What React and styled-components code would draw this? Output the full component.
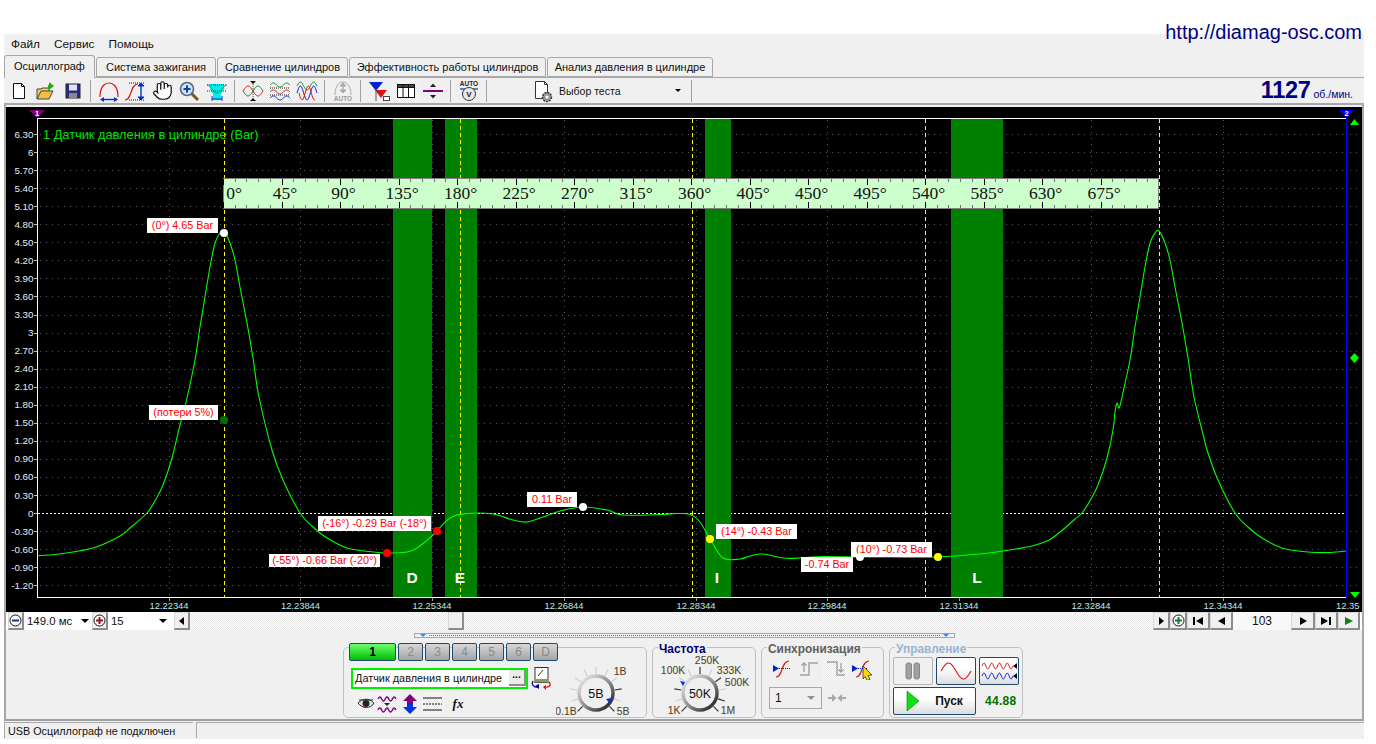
import React from "react";
import styled, { createGlobalStyle } from "styled-components";
import { Hand } from "lucide-react";

const UI = `"Liberation Sans", Arial, sans-serif`;
const Global = createGlobalStyle`
  html, body { margin: 0; padding: 0; background: #fff; height: 744px; overflow: hidden; }
  #root { width: 1376px; height: 744px; }
`;
const dither = `repeating-conic-gradient(#ffffff 0 25%, #e6e6e6 0 50%) 0 0 / 2px 2px`;

const Page = styled.div`position: relative; width: 1376px; height: 744px; padding: 34px 0 0 4px; box-sizing: border-box; font-family: ${UI}; color: #111;`;
const SiteLink = styled.div`position: absolute; top: 20px; right: 14px; font-size: 20px; line-height: 24px; color: #000080; z-index: 5;`;
const Win = styled.div`width: 1360px; height: 705px; background: #f0f0f0; display: flex; flex-direction: column;`;
const Menu = styled.div`height: 20px; padding-bottom: 1px; box-sizing: content-box; display: flex; align-items: center; padding-left: 7px; gap: 14px; font-size: 11.8px;`;
const TabRow = styled.div`height: 22px; display: flex; align-items: flex-end; position: relative; z-index: 2;`;
const Tab = styled.div`
  width: ${p => p.$w}px; margin-right: 1px; box-sizing: border-box;
  height: ${p => (p.$active ? 23 : 20)}px; margin-bottom: ${p => (p.$active ? -1 : 0)}px;
  border: 1px solid #a8a8a8; border-bottom: ${p => (p.$active ? "none" : "1px solid #a8a8a8")};
  border-radius: 3px 3px 0 0; background: #f0f0f0; font-size: 11px; text-align: center; line-height: ${p => (p.$active ? 20 : 19)}px;
`;
const Toolbar = styled.div`height: 28px; box-sizing: border-box; border-top: 1px solid #a8a8a8; border-bottom: 2px solid #a8a8a8; display: flex; align-items: center; padding-left: 1px; position: relative;`;
const ToolBtn = styled.div`width: 27px; height: 25px; display: flex; align-items: center; justify-content: center; flex: none; background: ${p => (p.$on ? dither : "transparent")};`;
const Sep = styled.div`width: 1px; height: 22px; background: #a0a0a0; margin: 0 4px; flex: none;`;
const TestPick = styled.div`display: flex; align-items: center; margin-left: 41px; width: 155px; gap: 3px; font-size: 10.5px; flex: none;`;
const TestArrow = styled.span`margin-left: auto; margin-right: 6px; width: 0; height: 0; border: 3px solid transparent; border-top: 3px solid #000; margin-top: 3px;`;
const Rpm = styled.div`margin-left: auto; margin-right: 11px; color: #000080; display: flex; align-items: baseline; gap: 3px;`;
const RpmNum = styled.span`font-size: 23.5px; font-weight: 700; letter-spacing: -0.3px;`;
const RpmUnit = styled.span`font-size: 10.5px;`;
const Frame = styled.div`border-left: 2px solid #a8a8a8; border-right: 2px solid #a8a8a8; padding-top: 2px; height: 525px; box-sizing: border-box; display: flex; flex-direction: column;`;
const Chart = styled.div`position: relative; height: 505px; background: #000; overflow: hidden; flex: none;`;
const ChartSvg = styled.svg`display: block; position: absolute; inset: 0;`;
const ChartTitle = styled.div`position: absolute; left: 37px; top: 21px; font-size: 12.8px; line-height: 14px; color: #00e000;`;
const Tag = styled.div`
  position: absolute; left: ${p => p.$x - 6}px; top: ${p => p.$y - 107}px; width: ${p => p.$w}px; height: ${p => p.$h}px;
  background: #fff; color: #ff0000; font-size: 10.8px; line-height: ${p => p.$h}px; text-align: center; white-space: nowrap;
`;
const TimeRow = styled.div`height: 18px; background: #fff; display: flex; align-items: stretch; flex: none;`;
const Bevel = styled.div`
  width: ${p => p.$w}px; flex: none; box-sizing: border-box; background: #f0f0f0; margin: ${p => p.$m || 0};
  border: 1px solid #d8d8d8; border-right: 2px solid #8c8c8c; border-bottom: 2px solid #8c8c8c;
  display: flex; align-items: center; justify-content: center;
`;
const ComboText = styled.div`width: ${p => p.$w}px; flex: none; font-size: 11.4px; line-height: 18px; padding-left: 3px; box-sizing: border-box; display: flex; align-items: center;`;
const Caret = styled.span`margin-left: auto; margin-right: ${p => p.$r || 4}px; width: 0; height: 0; border: 4px solid transparent; border-top: 4px solid #000; border-bottom: 0; flex: none;`;
const Track = styled.div`flex: 1; background: ${dither}; display: flex;`;
const Thumb = styled(Bevel)`margin-left: 258px;`;
const PageNum = styled.div`width: 58px; font-size: 12px; text-align: center; line-height: 18px; flex: none; background: #f8f8f8;`;
const Panel = styled.div`height: 91px; box-sizing: border-box; border-left: 2px solid #a8a8a8; border-right: 2px solid #a8a8a8; border-bottom: 2px solid #a0a0a0; padding-top: 3px; flex: none;`;
const RangeBar = styled.div`margin-left: 408px; width: 541px; height: 5px; box-sizing: border-box; border: 1px solid #a8a8a8; display: flex; align-items: center; justify-content: space-between; padding: 0 5px; position: relative;`;
const RangeDots = styled.div`position: absolute; left: 14px; right: 14px; top: 1px; border-top: 1px dotted #3a7fd0;`;
const RangeMark = styled.span`width: 0; height: 0; border: 3px solid transparent; border-top: 3px solid #3a8ae0; border-bottom: 0;`;
const Groups = styled.div`display: flex; gap: 5px; margin: 9px 0 0 337px;`;
const Group = styled.div`position: relative; width: ${p => p.$w}px; height: 71px; box-sizing: border-box; border: 1px solid #c0c0c0; border-radius: 5px; padding: ${p => p.$pad || 0}; display: flex; flex-direction: ${p => p.$dir || "row"};`;
const Legend = styled.div`position: absolute; left: 5px; top: -6px; padding: 0 1px; background: #f0f0f0; font-size: 11.9px; font-weight: 700; line-height: 14px; color: ${p => p.$c};`;
const LeftCol = styled.div`width: 207px; flex: none; margin-top: -5px; margin-left: 5px;`;
const ChannelRow = styled.div`display: flex; gap: 2px;`;
const Channel = styled.div`
  width: ${p => (p.$active ? 47 : 25)}px; height: 18px; box-sizing: border-box; border: 1px solid #1d4a74; border-radius: 2px; flex: none;
  background: ${p => (p.$active ? "linear-gradient(#6dff6d, #00bd00)" : "linear-gradient(#d8d8d8, #a4a4a4)")};
  color: ${p => (p.$active ? "#000" : "#8a8a8a")}; font-weight: ${p => (p.$active ? 700 : 400)}; font-size: 12px; line-height: 16px; text-align: center;
`;
const InputRow = styled.div`display: flex; align-items: center; margin: 5px 0 0 2px; gap: 2px;`;
const InputBox = styled.div`width: 177px; height: 21px; box-sizing: border-box; border: 1px solid #00f000; outline: 1px solid #00f000; outline-offset: -2px; background: #fff; display: flex; align-items: center; justify-content: space-between; padding: 0 1px 0 3px; font-size: 10.9px; white-space: nowrap;`;
const DotsBtn = styled.div`width: 17px; height: 16px; background: #ececec; border-right: 2px solid #909090; border-bottom: 2px solid #909090; font-size: 10px; font-weight: 700; text-align: center; line-height: 9px; box-sizing: border-box; flex: none;`;
const ChIcons = styled.div`display: flex; align-items: center; margin: 2px 0 0 6px;`;
const ChIcon = styled.div`width: ${p => p.$w || 22}px; height: 23px; display: flex; align-items: center; justify-content: center; background: ${p => (p.$on ? dither : "transparent")}; margin-right: ${p => p.$mr || 0}px; font-family: "Liberation Serif", serif; font-style: italic; font-weight: 700; font-size: 13px;`;
const KnobSvg = styled.svg`display: block; flex: none; align-self: flex-end;`;
const SyncRow = styled.div`display: flex; height: 22px; margin-left: 6px;`;
const SyncCell = styled.div`width: 27px; height: 22px; display: flex; align-items: center; justify-content: center; background: ${p => (p.$on ? dither : "transparent")};`;
const SyncBottom = styled.div`display: flex; align-items: center; margin: 7px 0 0 7px; gap: 5px;`;
const SyncSelect = styled.div`width: 53px; height: 22px; box-sizing: border-box; border: 1px solid #a8a8a8; display: flex; align-items: center; padding-left: 5px; font-size: 12px;`;
const GrayCaret = styled.span`margin-left: auto; margin-right: 6px; width: 0; height: 0; border: 4px solid transparent; border-top: 4px solid #909090; border-bottom: 0;`;
const CtlRow = styled.div`display: flex; gap: 3px; margin-left: 3px; margin-bottom: ${p => p.$mb || 0}px; align-items: center;`;
const CtlBtn = styled.div`
  width: ${p => p.$w || 40}px; height: 28px; box-sizing: border-box; border-radius: 2px; flex: none;
  border: ${p => (p.$flat ? "1px solid #b4b4b4" : "1px solid #1d4a74")}; display: flex; align-items: center; gap: 15px; justify-content: center;
  background: ${p => (p.$flat ? "#f0f0f0" : "linear-gradient(#ffffff 40%, #dcdcdc)")}; font-size: 12px; font-weight: 700;
`;
const Freq = styled.div`margin-left: 6px; color: #007000; font-size: 12px; font-weight: 700; letter-spacing: 0.3px;`;
const Status = styled.div`margin-top: 1px; height: 16px; display: flex; gap: 3px;`;
const StatusCell = styled.div`width: ${p => p.$w ? p.$w + "px" : "auto"}; flex: ${p => p.$w ? "none" : 1}; box-sizing: border-box; border-top: 1px solid #a8a8a8; border-left: 1px solid #a8a8a8; padding-left: 3px; font-size: 10.8px; line-height: 16px;`;

/* helpers */
const wave = (x0, x1, y, a, n, ph = 0) => {
  const pts = [];
  for (let x = x0; x <= x1 + 0.01; x += 0.5) pts.push(`${x},${(y - a * Math.sin(((x - x0) / (x1 - x0)) * n * 2 * Math.PI + ph)).toFixed(2)}`);
  return "M" + pts.join("L");
};
const Ico = ({ w = 22, h = 22, children }) => <svg width={w} height={h} viewBox={`0 0 ${w} ${h}`} fill="none">{children}</svg>;
const arrowV = (x, y0, y1, c) => (<g><path d={`M${x} ${y0}V${y1}`} stroke={c} strokeWidth="1.4" /><path d={`M${x - 3} ${y0 + 3}L${x} ${y0}L${x + 3} ${y0 + 3}zM${x - 3} ${y1 - 3}L${x} ${y1}L${x + 3} ${y1 - 3}z`} fill={c} stroke={c} /></g>);

const icons = {
  doc: <Ico><path d="M5.5 3.5h8l3 3v12h-11z" fill="#fff" stroke="#111" /><path d="M13.5 3.5v3h3" stroke="#111" /></Ico>,
  open: <Ico w={24}><path d="M3 19V9h4l1-1h7v3" fill="#f3d060" stroke="#444" /><path d="M3 19l4-8h12l-4 8z" fill="#f0c040" stroke="#444" /><path d="M15 2l5 4-5 4z" fill="#18b018" /><path d="M15 5v4" stroke="#18b018" strokeWidth="2" /></Ico>,
  save: <Ico><rect x="4" y="4" width="14" height="14" fill="#2c2c88" stroke="#222" /><rect x="7" y="4.5" width="8" height="6" fill="#dfe4f0" /><rect x="7" y="13" width="8" height="5" fill="#888" /></Ico>,
  arch: <Ico w={24}><path d="M3 17C3 5 9 3 12 3s9 2 9 14" stroke="#e01010" strokeWidth="1.2" /><path d="M4 19.5h16" stroke="#0030d0" strokeWidth="1.4" /><path d="M7 17l-4 2.5 4 2.5zM17 17l4 2.5-4 2.5z" fill="#0030d0" /></Ico>,
  scurve: <Ico w={24}><path d="M1 20C8 20 6 4 14 4" stroke="#e01010" strokeWidth="1.2" /><path d="M5 3h15M5 20h15" stroke="#111" strokeDasharray="1 1" />{arrowV(17, 3, 20, "#0030d0")}</Ico>,
  hand: <Hand size={21} fill="#fff" strokeWidth={1.4} color="#111" />,
  mag: <Ico w={24}><path d="M13 13l7 7" stroke="#7a5a20" strokeWidth="3" /><circle cx="9" cy="9" r="6.5" fill="#cfe2f6" stroke="#5a6a80" strokeWidth="1.6" /><path d="M5.5 9h7M9 5.5v7" stroke="#1040a0" strokeWidth="2" /></Ico>,
  cyanw: <Ico w={24}><path d="M5 4h14v5l-3 5v6H8v-6L5 9z" fill="#00eeee" /><path d="M2 5h20M2 11h20" stroke="#222" strokeDasharray="1 1" /><path d={wave(2, 22, 9, 4, 1, Math.PI / 2)} stroke="#208020" /><path d="M7 19h10" stroke="#0030d0" /><path d="M7 16v5M17 16v5" stroke="#0030d0" /></Ico>,
  crossw: <Ico w={22}><path d={wave(1, 21, 11, 5, 1)} stroke="#e01010" /><path d={wave(1, 21, 11, -5, 1)} stroke="#108010" /><path d="M11 4v14" stroke="#555" strokeDasharray="1 1" /><path d="M8 1h6l-3 3zM8 21h6l-3-3z" fill="#111" /></Ico>,
  threew: <Ico w={22}><path d={wave(1, 21, 5, 2, 1.5)} stroke="#109010" /><path d={wave(1, 21, 12, 2, 1.5)} stroke="#e01010" /><path d={wave(1, 21, 18, 2, 1.5)} stroke="#0020e0" /><path d="M1 8h20M1 15h20" stroke="#222" strokeDasharray="1 1" /></Ico>,
  overw: <Ico w={22}><path d={wave(1, 21, 6, 4, 1.5)} stroke="#109010" /><path d={wave(1, 21, 13, 7, 1.5)} stroke="#0020e0" /><path d={wave(3, 19, 13, -7, 1.3)} stroke="#e01010" /></Ico>,
  auto: <Ico w={22}><path d="M3 15C3 5 8 2 11 2s8 3 8 13" stroke="#aaa" />{arrowV(11, 3, 13, "#aaa")}<text x="11" y="21" textAnchor="middle" fontSize="6.5" fontWeight="700" fill="#999" fontFamily={UI}>AUTO</text></Ico>,
  funnel: <Ico w={24}><path d="M2 2h14l-7 9z" fill="#0020d0" /><path d="M8 10h12l-6 8z" fill="#e01010" /><path d="M9 8v13" stroke="#555" /><rect x="16.5" y="16.5" width="6" height="4" fill="#fff" stroke="#445" /></Ico>,
  table: <Ico w={22}><rect x="2.5" y="4.5" width="17" height="13" fill="#fff" stroke="#111" /><rect x="2.5" y="4.5" width="17" height="3" fill="#444" stroke="#111" /><path d="M8 5v13M13.5 5v13" stroke="#111" /></Ico>,
  divider: <Ico w={22}><path d="M1 11h20" stroke="#800080" strokeWidth="2" /><path d="M8 7h6l-3-3.5zM8 15h6l-3 3.5z" fill="#222" /></Ico>,
  autov: <Ico w={22}><text x="11" y="6" textAnchor="middle" fontSize="6.5" fontWeight="700" fill="#222" fontFamily={UI}>AUTO</text><circle cx="11" cy="14" r="6.5" fill="#e8e8e8" stroke="#333" /><text x="11" y="17" textAnchor="middle" fontSize="8" fontWeight="700" fill="#222" fontFamily={UI}>V</text><path d="M2 9h5M15 9h5" stroke="#1060e0" strokeWidth="1.5" /></Ico>,
  testdoc: <Ico w={24} h={24}><path d="M3.5 2.5h9l3 3v14h-12z" fill="#fff" stroke="#333" /><path d="M12.5 2.5v3h3" stroke="#333" /><circle cx="15" cy="18" r="4.5" fill="#999" stroke="#333" strokeDasharray="2 1" strokeWidth="1.4" /><circle cx="15" cy="18" r="1.5" fill="#fff" /></Ico>,
  eye: <Ico w={18} h={14}><path d="M1 6C5 1 13 1 17 6c-3 6-12 6-16 0z" fill="#ddd" stroke="#333" /><circle cx="9" cy="6.5" r="3.4" fill="#222" /><path d="M2 3l14 0" stroke="#333" /><circle cx="7" cy="9" r="1" fill="#b02020" /></Ico>,
  purplew: <Ico w={22} h={22}><path d={wave(1, 19, 6, 2, 2.5)} stroke="#800080" strokeWidth="1.4" /><path d={wave(1, 19, 17, 2, 2.5)} stroke="#800080" strokeWidth="1.4" /><path d="M7 10h6l-3 3z" fill="#222" /></Ico>,
  updown: <Ico w={16} h={22}><path d="M8 1l7 7h-4v3H5V8H1z" fill="#800080" /><path d="M8 21l-7-7h4v-3h6v3h4z" fill="#0030e0" /></Ico>,
  lines: <Ico w={22} h={22}><path d="M1 5h19M1 17h19" stroke="#111" /><path d="M1 11h19" stroke="#111" strokeDasharray="2 1" /></Ico>,
  meter: <Ico w={22} h={24}><rect x="5" y="1.5" width="13" height="15" fill="#fff" stroke="#333" /><rect x="5" y="13" width="13" height="3.5" fill="#80a060" /><path d="M8 10l5-6" stroke="#333" /><path d="M3 15c-2 4 1 7 6 6" stroke="#000090" strokeWidth="1.2" /><path d="M19 16c3 3 0 6-5 5" stroke="#e01010" strokeWidth="1.2" /><path d="M5 20l4-2v5z" fill="#000090" /><path d="M16 19l-3 2 3 3z" fill="#e01010" /></Ico>,
  sync1: <Ico w={22}><path d="M5 19C12 19 10 3 18 3" stroke="#e01010" strokeWidth="1.2" /><path d="M2 7l6 3.5-6 3.5z" fill="#0020d0" /><path d="M8 10.5h11" stroke="#0020d0" strokeDasharray="1 1" /></Ico>,
  stepUp: <Ico w={22}><path d="M2 17h9V5h9" stroke="#a0a0a0" strokeWidth="1.4" /><path d="M6 5v9M3.5 7.5L6 5l2.5 2.5" stroke="#a0a0a0" strokeWidth="1.3" /></Ico>,
  stepDn: <Ico w={22}><path d="M2 4h10v13h8" stroke="#a0a0a0" strokeWidth="1.4" /><path d="M16 5v9M13.5 11.5L16 14l2.5-2.5" stroke="#a0a0a0" strokeWidth="1.3" /></Ico>,
  sync2: <Ico w={24}><path d="M5 19C12 19 10 3 18 3" stroke="#e01010" strokeWidth="1.2" /><path d="M1 7l6 3.5-6 3.5z" fill="#0020d0" /><path d="M7 10.5h9" stroke="#0020d0" strokeDasharray="1 1" /><path d="M12 8l9 9-4 .5 2 4-3 1-2-4-2 2.5z" fill="#ffd800" stroke="#333" strokeWidth=".8" /></Ico>,
  arrowsIn: <Ico w={20} h={10}><path d="M1 5h7M19 5h-7" stroke="#a8a8a8" strokeWidth="2" /><path d="M5 1l4.5 4L5 9zM15 1l-4.5 4L15 9z" fill="#a8a8a8" /></Ico>,
  pause: <Ico w={20} h={20}><rect x="3" y="2" width="5.5" height="16" rx="2" fill="#a0a0a0" stroke="#888" /><rect x="11" y="2" width="5.5" height="16" rx="2" fill="#a0a0a0" stroke="#888" /></Ico>,
  sine: <Ico w={32} h={22}><path d={wave(1, 31, 11, 8, 1)} stroke="#e01010" strokeWidth="1.1" /></Ico>,
  redblue: <Ico w={36} h={22}><path d={wave(1, 32, 6, 3, 4)} stroke="#e01010" /><path d={wave(1, 32, 16, 3, 4)} stroke="#0020d0" /><path d="M36 3l-4 3 4 3zM36 13l-4 3 4 3z" fill="#111" /></Ico>,
  play: <Ico w={14} h={22}><path d="M1 1l12 10L1 21z" fill="#10e010" stroke="#109010" strokeWidth=".7" /></Ico>,
};

const T = ({ d, c = "#000" }) => <svg width="12" height="12" viewBox="0 0 12 12"><path d={d} fill={c} /></svg>;

/* chart data */
const gridX = [169, 300.5, 432, 564, 696, 827, 959, 1091, 1223];
const timeLabels = ["12.22344", "12.23844", "12.25344", "12.26844", "12.28344", "12.29844", "12.31344", "12.32844", "12.34344"];
const yLabels = ["6.30", "6", "5.70", "5.40", "5.10", "4.80", "4.50", "4.20", "3.90", "3.60", "3.30", "3", "2.70", "2.40", "2.10", "1.80", "1.50", "1.20", "0.90", "0.60", "0.30", "0", "-0.30", "-0.60", "-0.90", "-1.20"];
const yAt = i => 134 + i * 18.05;
const bands = [[393, 39, "D", 412], [445, 32, "E", 460], [705, 26, "I", 717], [951, 52, "L", 977]];
const cursors = [224, 460, 692, 925, 1159];
const pts = [[38, 555.7], [55, 554.5], [73, 552], [97, 546.7], [120, 536], [130, 528], [147, 513], [156, 499], [163, 485], [172, 458], [180, 425], [187, 398], [195, 360], [200, 327], [205, 297], [210, 267], [215, 243], [220, 233], [224, 231.5], [230, 243], [235, 260], [240, 287], [247, 323], [253, 358], [259, 397], [272, 450], [283, 480], [300, 513], [313, 527], [327, 538], [347, 548], [373, 552], [387, 553], [407, 552], [417, 548], [433, 535], [450, 518], [467, 513.5], [493, 514], [513, 520], [527, 522], [543, 517], [560, 511], [583, 507], [607, 510], [623, 515], [660, 514.5], [677, 513.5], [690, 514.5], [700, 522], [710, 539], [723, 558], [740, 559], [750, 556], [763, 554], [783, 558], [800, 558], [823, 556.5], [860, 557], [890, 557], [937, 557], [980, 554], [1003, 551], [1032, 546], [1047, 541], [1055, 536], [1065, 528], [1075, 519], [1082, 513], [1091, 499], [1098, 485], [1107, 458], [1113, 430], [1115, 412], [1117, 403], [1119, 408], [1122, 397], [1130, 360], [1135, 327], [1140, 297], [1145, 267], [1150, 243], [1155, 233], [1159, 231], [1165, 243], [1170, 260], [1175, 287], [1182, 323], [1188, 358], [1194, 397], [1203, 434], [1207, 450], [1218, 480], [1235, 513], [1248, 527], [1262, 538], [1282, 548], [1308, 552], [1330, 552.500], [1346, 551]];
const smooth = p => {
  let d = `M${p[0][0]} ${p[0][1]}`;
  for (let i = 0; i < p.length - 1; i++) {
    const a = p[Math.max(0, i - 1)], b = p[i], c = p[i + 1], e = p[Math.min(p.length - 1, i + 2)];
    d += `C${(b[0] + (c[0] - a[0]) / 6).toFixed(1)} ${(b[1] + (c[1] - a[1]) / 6).toFixed(1)} ${(c[0] - (e[0] - b[0]) / 6).toFixed(1)} ${(c[1] - (e[1] - b[1]) / 6).toFixed(1)} ${c[0]} ${c[1]}`;
  }
  return d;
};
const dots = [[224, 233, "#fff"], [224, 420, "#007000"], [387, 553, "#f00"], [437, 531, "#f00"], [583, 507, "#fff"], [710, 539, "#ff0"], [860, 557, "#fff"], [938, 557, "#ff0"]];
const tags = [
  ["(0°) 4.65 Bar", 147, 218, 71, 15], ["(потери 5%)", 149, 405, 69, 15], ["(-16°) -0.29 Bar (-18°)", 318, 516, 113, 15],
  ["(-55°) -0.66 Bar (-20°)", 269, 554, 111, 13], ["0.11 Bar", 527, 492, 50, 15], ["(14°) -0.43 Bar", 716, 524, 81, 15],
  ["-0.74 Bar", 801, 557, 52, 15], ["(10°) -0.73 Bar", 851, 542, 81, 15],
];
const angles = Array.from({ length: 16 }, (_, i) => i * 45);

const Plot = () => (
  <Chart>
    <ChartSvg width="1356" height="505" viewBox="6 107 1356 505" fontFamily={UI}>
      {yLabels.map((l, i) => (
        <g key={l}>
          <text x="33.5" y={yAt(i) + 3.5} textAnchor="end" fontSize="9.8" fill="#e6eef6">{l}</text>
          {l !== "0" && <path d={`M40 ${Math.round(yAt(i)) + 0.5}H1346M1350 ${Math.round(yAt(i)) + 0.5}H1358`} stroke="#5c5c5c" strokeDasharray="1 5" />}
          <path d={`M34 ${Math.round(yAt(i)) + 0.5}h3`} stroke="#bbb" />
        </g>
      ))}
      {gridX.map(x => <path key={x} d={`M${Math.floor(x) + 0.5} 120V597`} stroke="#5c5c5c" strokeDasharray="1 5" />)}
      <path d="M38 513.5H1346" stroke="#fff" strokeDasharray="2 2" />
      {bands.map(([x, w]) => <rect key={x} x={x} y="119" width={w} height="478" fill="#008000" />)}
      {cursors.map(x => <path key={x} d={`M${x + 0.5} 119V597`} stroke="#ffff00" strokeDasharray="4 3" />)}
      <path d="M37.5 118V598M37 118.5H1346M37 597.5H1346" stroke="#fff" />
      <path d="M1346.5 118V598" stroke="#0000ff" />
      <path d="M29 110h16l-8 8z" fill="#800080" />
      <text x="37" y="116" textAnchor="middle" fontSize="7.5" fontWeight="700" fill="#fff">1</text>
      <path d="M1339 110h15l-7.5 8z" fill="#0000ff" />
      <text x="1346.5" y="116" textAnchor="middle" fontSize="7.5" fontWeight="700" fill="#fff">2</text>
      <path d="M1350 125h9l-4.500-6z" fill="#00ff00" />
      <path d="M1354.500 353l4.500 5-4.500 5-4.500-5z" fill="#00ff00" />
      <path d="M1350 592h10l-5 6z" fill="#00ff00" />
      {gridX.map((x, i) => (
        <g key={x}>
          <path d={`M${Math.floor(x) + 0.5} 598v3`} stroke="#999" />
          <text x={x} y="609" textAnchor="middle" fontSize="9.4" fill="#bfe8e8">{timeLabels[i]}</text>
        </g>
      ))}
      <text x="1336" y="609" fontSize="9.4" fill="#bfe8e8">12.35</text>
      <rect x="223.500" y="178.500" width="935" height="30" fill="#ccffcc" stroke="#808080" />
      {Array.from({ length: 80 }, (_, i) => {
        const x = Math.round(223 + i * 11.7) + 0.5;
        const len = i % 5 === 0 ? 6 : 3;
        return <path key={i} d={`M${x} 179v${len}M${x} 208v-${len}`} stroke={i % 5 === 0 ? "#000" : "#707070"} />;
      })}
      {angles.map((a, i) => (
        <text key={a} x={i === 0 ? 234 : 223 + i * 58.5 + 3.5} y="199" textAnchor="middle" fontSize="17.500" fontFamily="'Liberation Serif', serif" fill="#111">{a}°</text>
      ))}
      {bands.map(([x, , l, cx]) => <text key={x} x={cx} y="583" textAnchor="middle" fontSize="15.500" fontWeight="700" fill="#fff">{l}</text>)}
      <path d={smooth(pts)} stroke="#00ff00" strokeWidth="1.1" fill="none" />
    </ChartSvg>
    <ChartTitle>1 Датчик давления в цилиндре (Bar)</ChartTitle>
    {tags.map(([t, x, y, w, h]) => <Tag key={t} $x={x} $y={y} $w={w} $h={h}>{t}</Tag>)}
    <ChartSvg width="1356" height="505" viewBox="6 107 1356 505">
      {dots.map(([x, y, c], i) => <circle key={i} cx={x} cy={y} r="4" fill={c} />)}
    </ChartSvg>
  </Chart>
);

const ticks = (cx, cy, r0, r1, from, to, n, skip = []) => Array.from({ length: n + 1 }, (_, i) => {
  const a = ((from + ((to - from) * i) / n) * Math.PI) / 180;
  const major = skip.includes(i);
  return <path key={i} d={`M${cx + r0 * Math.cos(a)} ${cy - r0 * Math.sin(a)}L${cx + r1 * Math.cos(a)} ${cy - r1 * Math.sin(a)}`} stroke={major ? "#333" : "#cfcfcf"} strokeWidth="1.2" />;
});
const Dial = ({ id, cx, cy, box, label, labels, marker, majors }) => (
  <KnobSvg width={box[2]} height={box[3]} viewBox={box.join(" ")} fontFamily={UI}>
    <defs>
      <linearGradient id={id} x1="0" y1="0" x2="1" y2="1">
        <stop offset="0" stopColor="#f4f4f4" /><stop offset="0.55" stopColor="#888" /><stop offset="1" stopColor="#111" />
      </linearGradient>
    </defs>
    {ticks(cx, cy, 19, 26, 225, -45, 10, majors)}
    <circle cx={cx} cy={cy} r="17" fill="#f0f0f0" stroke={`url(#${id})`} strokeWidth="3.4" />
    <text x={cx} y={cy + 4.5} textAnchor="middle" fontSize="12.500" fill="#111">{label}</text>
    <path d={marker} fill="#1030e0" />
    {labels.map(([t, x, y]) => <text key={t} x={x} y={y} textAnchor="middle" fontSize="10.400" fill="#333" stroke="#d0903044" strokeWidth=".5">{t}</text>)}
  </KnobSvg>
);

export default function App() {
  return (
    <Page>
      <Global />
      <SiteLink>http://diamag-osc.com</SiteLink>
      <Win>
        <Menu><span>Файл</span><span>Сервис</span><span>Помощь</span></Menu>
        <TabRow>
          <Tab $w={91} $active>Осциллограф</Tab>
          <Tab $w={120}>Система зажигания</Tab>
          <Tab $w={131}>Сравнение цилиндров</Tab>
          <Tab $w={197}>Эффективность работы цилиндров</Tab>
          <Tab $w={166}>Анализ давления в цилиндре</Tab>
        </TabRow>
        <Toolbar>
          <ToolBtn>{icons.doc}</ToolBtn><ToolBtn>{icons.open}</ToolBtn><ToolBtn>{icons.save}</ToolBtn><Sep />
          <ToolBtn>{icons.arch}</ToolBtn><ToolBtn>{icons.scurve}</ToolBtn><ToolBtn $on>{icons.hand}</ToolBtn><ToolBtn>{icons.mag}</ToolBtn><ToolBtn>{icons.cyanw}</ToolBtn><Sep />
          <ToolBtn>{icons.crossw}</ToolBtn><ToolBtn $on>{icons.threew}</ToolBtn><ToolBtn>{icons.overw}</ToolBtn><Sep />
          <ToolBtn>{icons.auto}</ToolBtn><Sep />
          <ToolBtn>{icons.funnel}</ToolBtn><ToolBtn $on>{icons.table}</ToolBtn><ToolBtn>{icons.divider}</ToolBtn><Sep />
          <ToolBtn>{icons.autov}</ToolBtn><Sep />
          <TestPick>{icons.testdoc}<span>Выбор теста</span><TestArrow /></TestPick><Sep />
          <Rpm><RpmNum>1127</RpmNum><RpmUnit>об./мин.</RpmUnit></Rpm>
        </Toolbar>
        <Frame>
          <Plot />
          <TimeRow>
            <Bevel $w={16} $m="0 0 0 2px"><svg width="13" height="13" viewBox="0 0 13 13"><circle cx="6.500" cy="6.500" r="5.500" fill="#fff" stroke="#111" /><path d="M3 6.500h7" stroke="#1030a0" strokeWidth="2" /></svg></Bevel>
            <ComboText $w={68}>149.0 мс<Caret $r={3} /></ComboText>
            <Bevel $w={16}><svg width="13" height="13" viewBox="0 0 13 13"><circle cx="6.500" cy="6.500" r="5.500" fill="#fff" stroke="#111" /><path d="M3 6.500h7M6.500 3v7" stroke="#a01020" strokeWidth="2" /></svg></Bevel>
            <ComboText $w={66}>15<Caret $r={7} /></ComboText>
            <Bevel $w={16}><T d="M8 2v8L3 6z" /></Bevel>
            <Track><Thumb $w={16} /></Track>
            <Bevel $w={17}><T d="M4 2v8l5-4z" /></Bevel>
            <Bevel $w={17}><svg width="13" height="13" viewBox="0 0 13 13"><circle cx="6.500" cy="6.500" r="5.500" fill="#fff" stroke="#111" /><path d="M3 6.500h7M6.500 3v7" stroke="#108020" strokeWidth="2" /></svg></Bevel>
            <Bevel $w={23}><T d="M1 2h2v8H1zM11 2v8L4 6z" /></Bevel>
            <Bevel $w={23}><T d="M10 2v8L3 6z" /></Bevel>
            <PageNum>103</PageNum>
            <Bevel $w={24}><T d="M3 2v8l7-4z" /></Bevel>
            <Bevel $w={23}><T d="M1 2v8l7-4zM9 2h2v8H9z" /></Bevel>
            <Bevel $w={22} $m="0 2px 0 0"><T d="M2 2v8l8-4z" c="#108010" /></Bevel>
          </TimeRow>
        </Frame>
        <Panel>
          <RangeBar><RangeDots /><RangeMark /><RangeMark /></RangeBar>
          <Groups>
            <Group $w={304}>
              <LeftCol>
                <ChannelRow>
                  <Channel $active>1</Channel>
                  {["2", "3", "4", "5", "6", "D"].map(c => <Channel key={c}>{c}</Channel>)}
                </ChannelRow>
                <InputRow>
                  <InputBox>Датчик давления в цилиндре<DotsBtn>...</DotsBtn></InputBox>
                  {icons.meter}
                </InputRow>
                <ChIcons>
                  <ChIcon $on>{icons.eye}</ChIcon>
                  <ChIcon $on $mr={3}>{icons.purplew}</ChIcon>
                  <ChIcon $w={16} $mr={4}>{icons.updown}</ChIcon>
                  <ChIcon $on $mr={6}>{icons.lines}</ChIcon>
                  <ChIcon $w={16}>fx</ChIcon>
                </ChIcons>
              </LeftCol>
              <Dial id="k1" cx={596} cy={693} box={[556, 659, 82, 58]} label="5В" majors={[0, 8, 10]}
                marker="M606 699l5 -1 -1 6z" labels={[["1В", 620, 675], ["5В", 623, 715], ["0.1В", 566, 715]]} />
            </Group>
            <Group $w={104}>
              <Legend $c="#000070">Частота</Legend>
              <Dial id="k2" cx={699} cy={693} box={[652, 648, 102, 69]} label="50K" majors={[0, 2, 5, 7, 9, 10]}
                marker="M684 682l-5-1 3 5z" labels={[["250K", 706, 664], ["100K", 672, 674], ["333K", 728, 674], ["500K", 736, 686], ["1K", 673, 714], ["1M", 727, 714]]} />
            </Group>
            <Group $w={123} $dir="column" $pad="10px 0 0 0">
              <Legend $c="#606060">Синхронизация</Legend>
              <SyncRow>
                <SyncCell>{icons.sync1}</SyncCell><SyncCell>{icons.stepUp}</SyncCell><SyncCell $on>{icons.stepDn}</SyncCell><SyncCell>{icons.sync2}</SyncCell>
              </SyncRow>
              <SyncBottom><SyncSelect>1<GrayCaret /></SyncSelect>{icons.arrowsIn}</SyncBottom>
            </Group>
            <Group $w={134} $dir="column" $pad="9px 0 0 0">
              <Legend $c="#9ab4d0">Управление</Legend>
              <CtlRow $mb={2}>
                <CtlBtn $flat>{icons.pause}</CtlBtn><CtlBtn>{icons.sine}</CtlBtn><CtlBtn>{icons.redblue}</CtlBtn>
              </CtlRow>
              <CtlRow>
                <CtlBtn $w={83}>{icons.play}<span>Пуск</span></CtlBtn>
                <Freq>44.88</Freq>
              </CtlRow>
            </Group>
          </Groups>
        </Panel>
        <Status>
          <StatusCell $w={189}>USB Осциллограф не подключен</StatusCell>
          <StatusCell />
        </Status>
      </Win>
    </Page>
  );
}
